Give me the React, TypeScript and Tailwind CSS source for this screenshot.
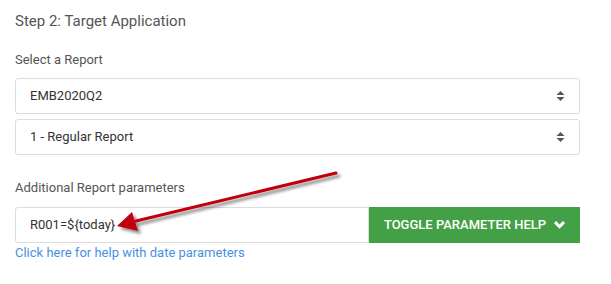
// Up/down caret pair used by the native-looking selects
function SortCaret() {
    return (
        <svg width="9" height="12" viewBox="0 0 9 12" className="text-[#555]">
            <path d="M0.5 5 L4.5 1 L8.5 5 Z" fill="currentColor" />
            <path d="M0.5 7 L4.5 11 L8.5 7 Z" fill="currentColor" />
        </svg>
    );
}

// Solid chevron, font-awesome style
function SolidChevron() {
    return (
        <svg width="11" height="8" viewBox="0 0 11 8">
            <path d="M0 2.2 L2.1 0.1 L5.5 3.5 L8.9 0.1 L11 2.2 L5.5 7.7 Z" fill="white" />
        </svg>
    );
}

function FakeSelect({ value }: { value: string }) {
    return (
        <div className="flex items-center justify-between h-[36px] pl-[14px] pr-[14px] border border-[#dcdcdc] rounded-[3px] bg-white text-[13px] text-[#333]">
            <span>{value}</span>
            <SortCaret />
        </div>
    );
}

export default function App() {
    return (
        <div
            className="relative w-[611px] h-[284px] bg-white pl-[15px] pr-[31px] pt-[11px]"
            style={{ fontFamily: 'Roboto, "Liberation Sans", sans-serif' }}
        >
            <h2 className="text-[15px] text-[#555] leading-[20px]">Step 2: Target Application</h2>

            <div className="mt-[19px] text-[13px] text-[#555] leading-[20px]">Select a Report</div>

            <div className="mt-[8px] flex flex-col gap-[5px] w-[565px]">
                <FakeSelect value="EMB2020Q2" />
                <FakeSelect value="1 - Regular Report" />
            </div>

            <div className="mt-[23px] text-[13px] text-[#555] leading-[20px]">Additional Report parameters</div>

            <div className="mt-[9px] flex w-[565px] h-[36px]">
                <div className="flex-1 flex items-center pl-[14px] border border-[#dcdcdc] rounded-l-[3px] text-[13px] text-[#333]">
                    R001=${'{'}today{'}'}
                </div>
                <button className="w-[211px] flex items-center justify-center gap-[8px] bg-[#43a047] text-white text-[13px] font-medium">
                    <span>TOGGLE PARAMETER HELP</span>
                    <SolidChevron />
                </button>
            </div>

            <a className="block mt-[1px] text-[13px] text-[#4a90e2] leading-[18px]">Click here for help with date parameters</a>

            {/* Annotation arrow */}
            <svg className="absolute left-0 top-0 pointer-events-none" width="611" height="284">
                <defs>
                    <filter id="sh" x="-20%" y="-50%" width="140%" height="200%">
                        <feGaussianBlur in="SourceAlpha" stdDeviation="1.8" />
                        <feOffset dx="3" dy="3" result="b" />
                        <feComponentTransfer>
                            <feFuncA type="linear" slope="0.45" />
                        </feComponentTransfer>
                        <feMerge>
                            <feMergeNode />
                            <feMergeNode in="SourceGraphic" />
                        </feMerge>
                    </filter>
                </defs>
                <g filter="url(#sh)">
                    <line x1="336" y1="173" x2="136" y2="221" stroke="#c0000b" strokeWidth="3" strokeLinecap="round" />
                    <path d="M117 226 L132 212 L138 231 Z" fill="#c0000b" />
                </g>
            </svg>
        </div>
    );
}
